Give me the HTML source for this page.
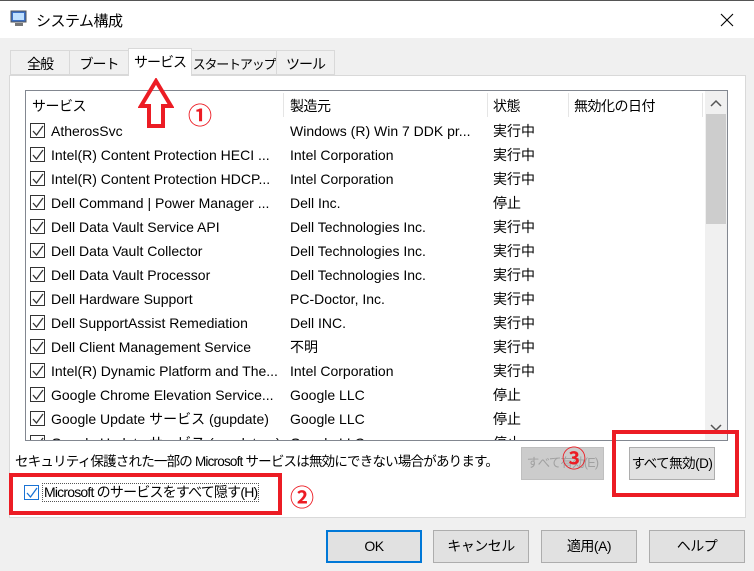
<!DOCTYPE html><html><head><meta charset="utf-8"><style>
*{box-sizing:border-box;margin:0;padding:0}
body{width:754px;height:571px;background:#f0f0f0;font-family:"Liberation Sans","Noto Sans CJK JP",sans-serif;font-size:14px;color:#000;position:relative;overflow:hidden}
.a{position:absolute;white-space:nowrap}
.cb{position:absolute;width:15px;height:15px;border:1px solid #333;background:#fff}
.cb svg{position:absolute;left:1px;top:1px}
.btn{position:absolute;background:#e1e1e1;border:1px solid #adadad;text-align:center;line-height:31px;white-space:nowrap;letter-spacing:-0.5px}
.red{position:absolute;border:4px solid #ec1c24}
.tab{position:absolute;top:50px;height:25px;background:#f0f0f0;border:1px solid #d9d9d9;padding:3px 0;text-align:center;white-space:nowrap;letter-spacing:-1px;font-size:14px;overflow:hidden}
.num{position:absolute;color:#ec1c24;font-size:24px;font-weight:bold;white-space:nowrap}
</style></head><body>
<div class="a" style="left:0;top:0;width:754px;height:38px;background:#fff;border-top:1px solid #555"></div>
<svg class="a" style="left:10px;top:10px" width="18" height="18"><rect x="1" y="1" width="15" height="11" fill="#3b6fc4" stroke="#555"/><rect x="3" y="3" width="11" height="7" fill="#bfe0ff"/><rect x="5" y="13" width="8" height="3" fill="#777"/></svg>
<div class="a" style="left:36px;top:10px;font-size:15px;letter-spacing:-0.5px">システム構成</div>
<svg class="a" style="left:720px;top:13px" width="14" height="14"><path d="M1 1L13 13M13 1L1 13" stroke="#000" stroke-width="1.1"/></svg>
<div class="a" style="left:9px;top:75px;width:737px;height:443px;background:#fff;border:1px solid #d9d9d9"></div>
<div class="tab" style="left:10px;width:60px">全般</div>
<div class="tab" style="left:69px;width:60px">ブート</div>
<div class="tab" style="left:128px;top:48px;width:64px;height:28px;background:#fff;border-bottom:none">サービス</div>
<div class="tab" style="left:191px;width:86px;font-size:13px;letter-spacing:-1.2px">スタートアップ</div>
<div class="tab" style="left:276px;width:59px">ツール</div>
<div class="a" style="left:25px;top:90px;width:703px;height:351px;border:1px solid #828790;background:#fff;overflow:hidden;letter-spacing:-0.5px">
<div class="a" style="left:6px;top:5px">サービス</div><div class="a" style="left:264px;top:5px">製造元</div><div class="a" style="left:467px;top:5px">状態</div><div class="a" style="left:548px;top:5px">無効化の日付</div>
<div class="a" style="left:257px;top:2px;width:1px;height:24px;background:#e5e5e5"></div>
<div class="a" style="left:461px;top:2px;width:1px;height:24px;background:#e5e5e5"></div>
<div class="a" style="left:542px;top:2px;width:1px;height:24px;background:#e5e5e5"></div>
<div class="a" style="left:676px;top:2px;width:1px;height:24px;background:#e5e5e5"></div>
<div class="a" style="left:679px;top:0;width:22px;height:349px;background:#f0f0f0"></div>
<div class="a" style="left:680px;top:23px;width:20px;height:110px;background:#cdcdcd"></div>
<svg class="a" style="left:684px;top:8px" width="12" height="8"><path d="M1 7L6 2L11 7" stroke="#555" stroke-width="1.5" fill="none"/></svg>
<svg class="a" style="left:684px;top:333px" width="12" height="8"><path d="M1 1L6 6L11 1" stroke="#555" stroke-width="1.5" fill="none"/></svg>
</div>
<div id="rows"></div>
<div class="a" style="left:15px;top:450px;font-size:13.5px;letter-spacing:-0.8px">セキュリティ保護された一部の Microsoft サービスは無効にできない場合があります。</div>
<div class="btn" style="left:521px;top:447px;width:83px;height:33px;color:#a0a0a0;background:#ccc;border-color:#bfbfbf;font-size:12.5px;letter-spacing:-0.8px">すべて有効(E)</div>
<div class="btn" style="left:629px;top:447px;width:86px;height:33px;font-size:13.5px">すべて無効(D)</div>
<div class="cb" style="left:24px;top:485px;border-color:#1a73d4"><svg width="12" height="12"><path d="M1 6 L4.5 10 L11 1" stroke="#1a73d4" stroke-width="1.3" fill="none"/></svg></div>
<div class="a" style="left:42px;top:483px;border:1px dotted #555;padding:0 1px;line-height:17px;letter-spacing:-0.8px">Microsoft のサービスをすべて隠す(H)</div>
<div class="btn" style="left:326px;top:530px;width:96px;height:33px;border:2px solid #0078d7;line-height:29px">OK</div>
<div class="btn" style="left:433px;top:530px;width:96px;height:33px">キャンセル</div>
<div class="btn" style="left:541px;top:530px;width:96px;height:33px">適用(A)</div>
<div class="btn" style="left:649px;top:530px;width:96px;height:33px">ヘルプ</div>
<div class="red" style="left:612px;top:430px;width:127px;height:67px"></div>
<div class="red" style="left:9px;top:473px;width:273px;height:42px"></div>
<svg class="a" style="left:138px;top:78px" width="36" height="52"><path d="M18 3 L33 28 L25 28 L25 48 L11 48 L11 28 L3 28 Z" fill="none" stroke="#ec1c24" stroke-width="4"/></svg>
<div class="num" style="left:188px;top:96px">①</div>
<div class="num" style="left:290px;top:478px">②</div>
<div class="num" style="left:562px;top:439px">③</div>
<script>
var d=[["AtherosSvc","Windows (R) Win 7 DDK pr...","実行中"],["Intel(R) Content Protection HECI ...","Intel Corporation","実行中"],["Intel(R) Content Protection HDCP...","Intel Corporation","実行中"],["Dell Command | Power Manager ...","Dell Inc.","停止"],["Dell Data Vault Service API","Dell Technologies Inc.","実行中"],["Dell Data Vault Collector","Dell Technologies Inc.","実行中"],["Dell Data Vault Processor","Dell Technologies Inc.","実行中"],["Dell Hardware Support","PC-Doctor, Inc.","実行中"],["Dell SupportAssist Remediation","Dell INC.","実行中"],["Dell Client Management Service","不明","実行中"],["Intel(R) Dynamic Platform and The...","Intel Corporation","実行中"],["Google Chrome Elevation Service...","Google LLC","停止"],["Google Update サービス (gupdate)","Google LLC","停止"],["Google Update サービス (gupdatem)","Google LLC","停止"]];
var h="";d.forEach(function(r,i){var y=119+i*24;
h+='<div class="a" style="left:26px;top:'+y+'px;width:678px;height:'+(i==13?(440-y):24)+'px;overflow:hidden;line-height:20px"><div class="cb" style="left:4px;top:4px"><svg width="12" height="12"><path d="M1 6 L4.5 10 L11 1" stroke="#333" stroke-width="1.3" fill="none"/></svg></div><div class="a" style="left:25px;top:2px">'+r[0]+'</div><div class="a" style="left:264px;top:2px">'+r[1]+'</div><div class="a" style="left:467px;top:2px">'+r[2]+'</div></div>';});
document.getElementById("rows").innerHTML=h;
</script>
</body></html>
